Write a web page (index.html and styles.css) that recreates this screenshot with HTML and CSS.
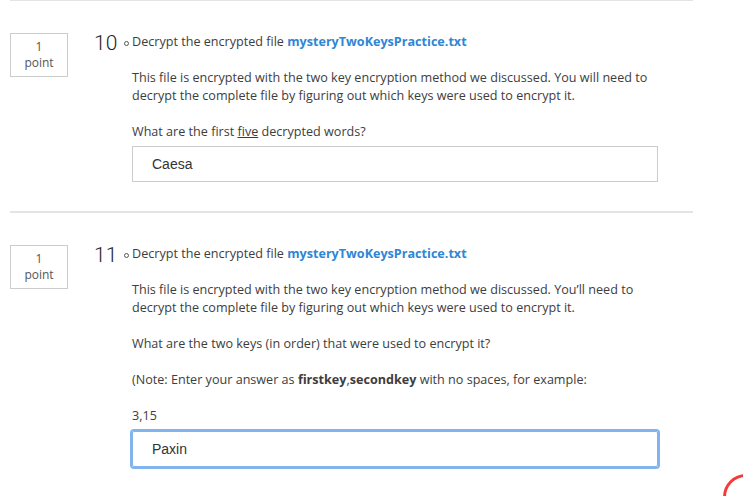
FILE: index.html
```html
<!DOCTYPE html>
<html lang="en">
<head>
<meta charset="utf-8">
<title>Quiz</title>
<link rel="stylesheet" href="styles.css">
</head>
<body>
<div class="page">
  <section class="question">
    <div class="points"><span>1</span><span>point</span></div>
    <div class="num">10</div>
    <div class="bullet"></div>
    <div class="content">
      <p class="prompt">Decrypt the encrypted file <a class="file" href="#">mysteryTwoKeysPractice.txt</a></p>
      <p>This file is encrypted with the two key encryption method we discussed. You will need to decrypt the complete file by figuring out which keys were used to encrypt it.</p>
      <p>What are the first <u>five</u> decrypted words?</p>
      <div class="answer">Caesa</div>
    </div>
  </section>
  <section class="question">
    <div class="points"><span>1</span><span>point</span></div>
    <div class="num">11</div>
    <div class="bullet"></div>
    <div class="content">
      <p class="prompt">Decrypt the encrypted file <a class="file" href="#">mysteryTwoKeysPractice.txt</a></p>
      <p>This file is encrypted with the two key encryption method we discussed. You’ll need to decrypt the complete file by figuring out which keys were used to encrypt it.</p>
      <p>What are the two keys (in order) that were used to encrypt it?</p>
      <p>(Note: Enter your answer as <b>firstkey</b>,<b>secondkey</b> with no spaces, for example:</p>
      <p>3,15</p>
      <div class="answer focused">Paxin</div>
    </div>
  </section>
</div>
<div class="ring"></div>
</body>
</html>
```
FILE: styles.css
```css
html, body {
  margin: 0;
  padding: 0;
  background: #ffffff;
  overflow: hidden;
}
body {
  font-family: "Open Sans", "Noto Sans", sans-serif;
  font-size: 12.6px;
  line-height: 18px;
  color: #3d3d3d;
}
.page {
  width: 683px;
  margin-left: 10px;
  margin-top: -1px;
}
.question {
  display: flex;
  align-items: flex-start;
  border-top: 2px solid #e4e4e4;
  padding-top: 32px;
  padding-bottom: 29px;
}
.points {
  box-sizing: border-box;
  width: 58px;
  height: 44px;
  border: 1px solid #cccccc;
  display: flex;
  flex-direction: column;
  align-items: center;
  justify-content: center;
  font-size: 12px;
  color: #555555;
  flex-shrink: 0;
}
.points span {
  display: block;
  line-height: 16px;
}
.num {
  font-family: Roboto, "Liberation Sans", Arial, sans-serif;
  font-weight: 300;
  font-size: 21px;
  line-height: 20px;
  color: #1e1e1e;
  margin-left: 26px;
  width: 30px;
  flex-shrink: 0;
}
.bullet {
  box-sizing: border-box;
  width: 5px;
  height: 5px;
  border: 1px solid #555555;
  border-radius: 50%;
  margin-top: 8px;
  margin-right: 3px;
  flex-shrink: 0;
}
.content {
  width: 526px;
}
.content p {
  margin: 18px 0 0;
}
.content p.prompt {
  margin-top: 0;
}
.file {
  color: #2e86d4;
  font-weight: 700;
  text-decoration: none;
}
.answer {
  box-sizing: border-box;
  margin-top: 5px;
  height: 36px;
  border: 1px solid #cccccc;
  padding-left: 19px;
  font-family: "Liberation Sans", Arial, sans-serif;
  font-size: 14px;
  line-height: 34px;
  color: #333333;
}
.answer.focused {
  border-color: #7fb4ee;
  border-radius: 2px;
  box-shadow: 0 0 0 2px #7fb4ee;
  margin-top: 6px;
}
.ring {
  position: fixed;
  left: 723px;
  top: 474px;
  width: 46px;
  height: 46px;
  box-sizing: border-box;
  border: 3px solid #f53a3a;
  border-radius: 50%;
}
```
